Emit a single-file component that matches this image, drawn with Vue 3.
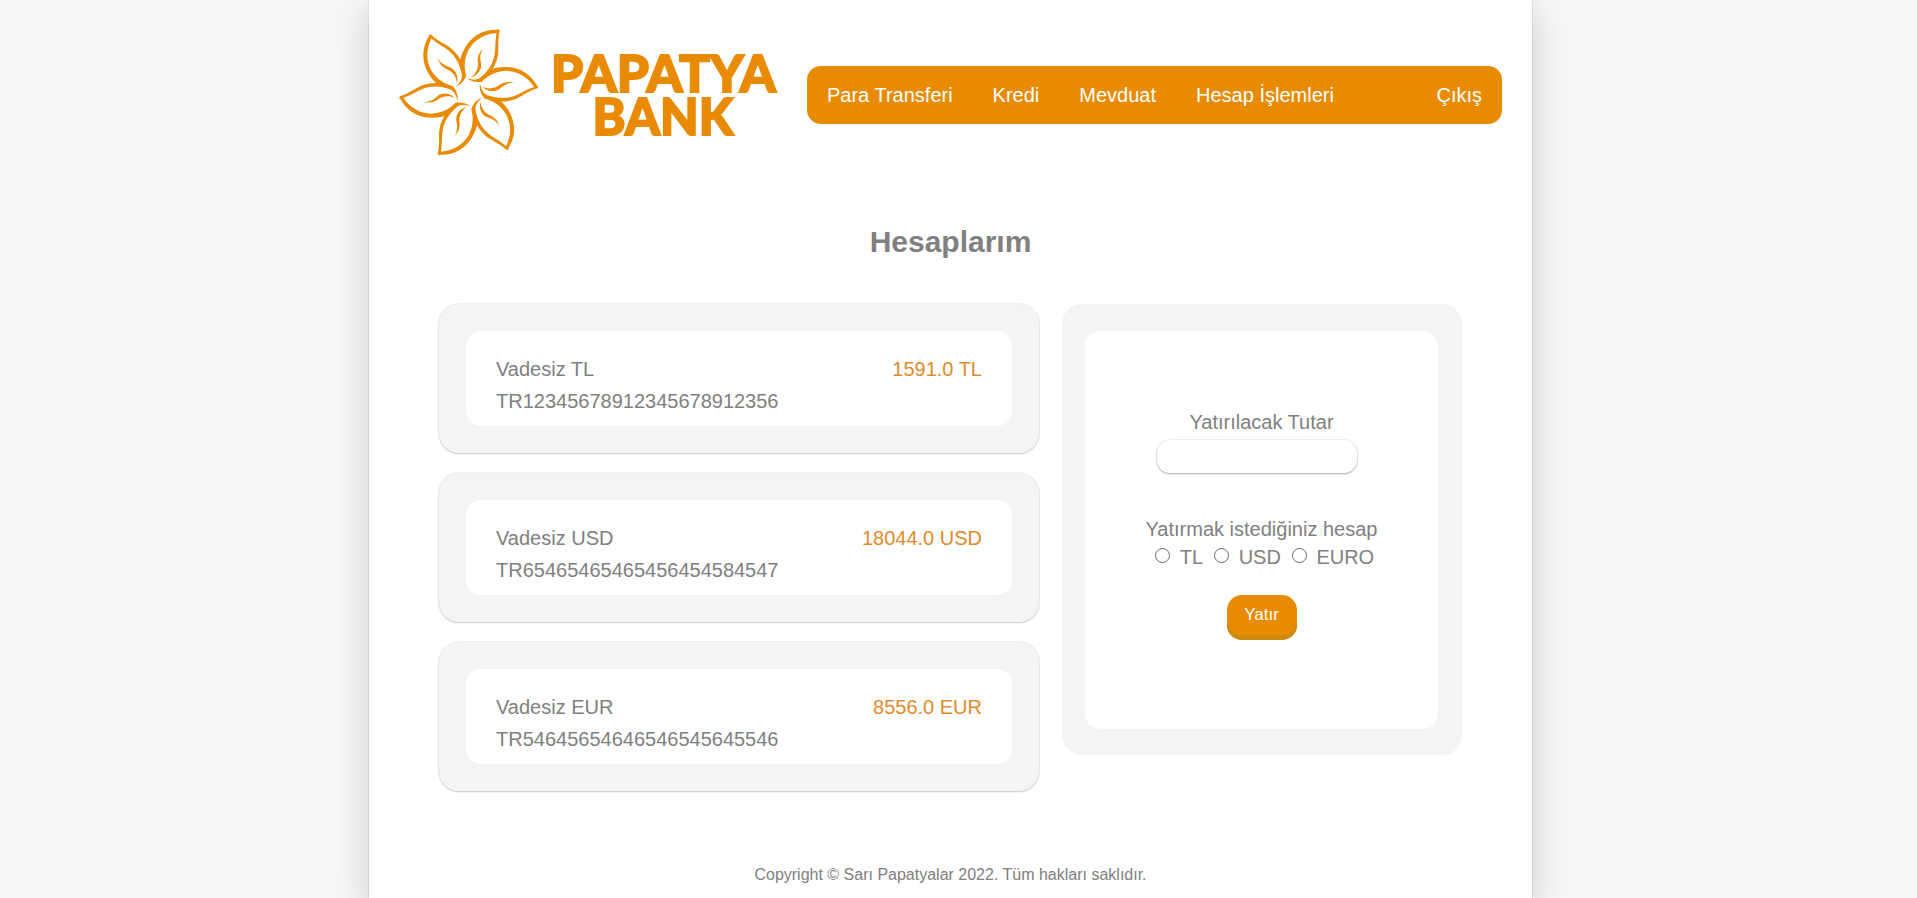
<script setup>
const links = ['Para Transferi', 'Kredi', 'Mevduat', 'Hesap İşlemleri']
const accounts = [
  { name: 'Vadesiz TL', iban: 'TR12345678912345678912356', balance: '1591.0 TL' },
  { name: 'Vadesiz USD', iban: 'TR65465465465456454584547', balance: '18044.0 USD' },
  { name: 'Vadesiz EUR', iban: 'TR54645654646546545645546', balance: '8556.0 EUR' },
]
const currencies = ['TL', 'USD', 'EURO']
const petals = [0, 60, 120, 180, 240, 300]
</script>

<template>
  <div class="page">
    <header class="header">
      <svg class="logo" width="400" height="150" viewBox="0 0 400 150" role="img">
        <g transform="translate(99.7 92.3) scale(0.33)">
          <g v-for="a in petals" :key="a" :transform="`rotate(${a})`">
            <path d="M210 -14 C190 -57 152 -77 112 -77 C92 -77 76 -74 64 -68 C54 -60 44 -50 34 -43 C24 -37 10 -37 -6 -43 C6 -32 24 -29 40 -32 C62 -54 84 -63 114 -65 C150 -64 180 -45 199 -15 Z" />
            <path d="M210 -20 C180 -13 162 2 138 11 C116 19 92 20 58 10 L72 26 C100 30 124 28 146 19 C168 8 184 -5 209 -12 Z" />
            <path d="M42 -17 C58 -9 78 -10 92 -21 C104 -31 120 -33 136 -30 C116 -28 106 -22 94 -11 C78 1 56 -2 42 -17 Z" />
          </g>
        </g>
        <text class="brand" x="182" y="91.5" textLength="225" lengthAdjust="spacingAndGlyphs">PAPATYA</text>
        <text class="brand" x="223.5" y="135" textLength="141" lengthAdjust="spacingAndGlyphs">BANK</text>
      </svg>
      <nav class="nav">
        <a v-for="l in links" :key="l">{{ l }}</a>
        <a class="exit">Çıkış</a>
      </nav>
    </header>

    <h1>Hesaplarım</h1>

    <main class="content">
      <section class="accounts">
        <article v-for="a in accounts" :key="a.iban" class="card">
          <div class="card-body">
            <div class="row"><span>{{ a.name }}</span><span class="balance">{{ a.balance }}</span></div>
            <div class="row">{{ a.iban }}</div>
          </div>
        </article>
      </section>

      <section class="panel">
        <form class="form" @submit.prevent>
          <label for="amount">Yatırılacak Tutar</label>
          <input id="amount" class="amount" type="text" />
          <p>Yatırmak istediğiniz hesap</p>
          <div class="options">
            <label v-for="c in currencies" :key="c"><input type="radio" name="currency" :value="c" />{{ c }}</label>
          </div>
          <button>Yatır</button>
        </form>
      </section>
    </main>

    <footer>Copyright © Sarı Papatyalar 2022. Tüm hakları saklıdır.</footer>
  </div>
</template>

<style>
html, body { background: #f7f7f7; overflow: hidden; }
</style>

<style scoped>
.page {
  width: 1163px;
  height: 898px;
  margin: 0 auto 0 369px;
  background: #fff;
  color: #808080;
  font: 20px/32px "Liberation Sans", Arial, sans-serif;
  box-shadow: 0 10px 36px rgba(0, 0, 0, .18), 0 0 0 1px rgba(0, 0, 0, .06);
}
.header { display: flex; height: 190px; align-items: flex-start; }
.logo { margin-right: 38px; overflow: visible; fill: #e98b00; flex: none; }
.brand { font: 900 51px Lato, sans-serif; stroke: #e98b00; stroke-width: 1.8px; }
.nav {
  display: flex;
  align-items: center;
  box-sizing: border-box;
  width: 695px;
  height: 58px;
  margin-top: 66px;
  background: #e98b00;
  border-radius: 14px;
  color: #fff;
}
.nav a { padding: 0 20px; }
.exit { margin-left: auto; }
h1 { margin: 35px 0 0; font-size: 30px; line-height: 34px; text-align: center; }
.content { display: flex; gap: 23px; align-items: flex-start; margin: 45px 0 0 70px; }
.accounts { display: grid; gap: 20px; }
.card {
  box-sizing: border-box;
  width: 600px;
  height: 149px;
  padding: 27px;
  background: #f4f4f4;
  border-radius: 20px;
  box-shadow: 0 1px 2px rgba(0, 0, 0, .18), 0 0 0 1px rgba(0, 0, 0, .05);
}
.card-body { box-sizing: border-box; height: 95px; padding: 22px 30px 0; background: #fff; border-radius: 15px; }
.row { display: flex; justify-content: space-between; }
.balance { color: #df8a2c; }
.panel {
  box-sizing: border-box;
  width: 400px;
  height: 451px;
  padding: 27px 24px 26px 23px;
  background: #f4f4f4;
  border-radius: 20px;
}
.form {
  display: flex;
  flex-direction: column;
  align-items: center;
  box-sizing: border-box;
  height: 398px;
  padding-top: 77px;
  background: #fff;
  border-radius: 15px;
  line-height: 28px;
}
.amount {
  box-sizing: border-box;
  width: 200px;
  height: 33px;
  margin: 4px 9px 0 0;
  border: 0;
  border-radius: 13px;
  background: #fff;
  box-shadow: 0 1px 2px rgba(0, 0, 0, .3), 0 0 0 1px rgba(0, 0, 0, .05);
}
.form p { margin: 42px 0 0; }
.options { display: flex; }
.options label { display: flex; align-items: center; }
.options input {
  appearance: none;
  width: 15px;
  height: 15px;
  margin: 0 9.5px 4px 11px;
  border: 1px solid #6b6b6b;
  border-radius: 50%;
}
.options label:first-child input { margin: 0 10px 4px 6px; }
button {
  width: 70px;
  height: 45px;
  margin-top: 24px;
  padding: 0 0 6px;
  border: 0;
  border-radius: 15px;
  background: #e98b00;
  color: #fff;
  font: 17px "Liberation Sans", Arial, sans-serif;
  box-shadow: inset 0 -5px 0 #cd8a0c;
}
footer { margin-top: 68px; font-size: 16px; line-height: 32px; text-align: center; }
</style>
